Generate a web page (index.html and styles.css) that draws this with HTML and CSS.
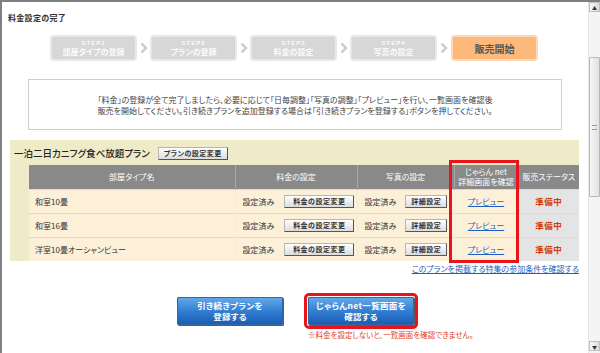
FILE: index.html
```html
<!DOCTYPE html>
<html lang="ja">
<head>
    <meta charset="UTF-8">
    <title>料金設定の完了</title>
    <link rel="stylesheet" href="styles.css">
</head>
<body>
<div class="frame">
    <div class="content">
        <h1 class="page-title">料金設定の完了</h1>

        <div class="steps">
            <div class="step"><span class="step-no">STEP1</span><span class="step-name">部屋タイプの登録</span></div>
            <svg class="step-arrow" width="8" height="12" viewBox="0 0 8 12"><path d="M1.5 1.5 L6 6 L1.5 10.5" fill="none" stroke="#c9c9c9" stroke-width="2.4"/></svg>
            <div class="step"><span class="step-no">STEP2</span><span class="step-name">プランの登録</span></div>
            <svg class="step-arrow" width="8" height="12" viewBox="0 0 8 12"><path d="M1.5 1.5 L6 6 L1.5 10.5" fill="none" stroke="#c9c9c9" stroke-width="2.4"/></svg>
            <div class="step"><span class="step-no">STEP3</span><span class="step-name">料金の設定</span></div>
            <svg class="step-arrow" width="8" height="12" viewBox="0 0 8 12"><path d="M1.5 1.5 L6 6 L1.5 10.5" fill="none" stroke="#c9c9c9" stroke-width="2.4"/></svg>
            <div class="step"><span class="step-no">STEP4</span><span class="step-name">写真の設定</span></div>
            <svg class="step-arrow" width="8" height="12" viewBox="0 0 8 12"><path d="M1.5 1.5 L6 6 L1.5 10.5" fill="none" stroke="#c9c9c9" stroke-width="2.4"/></svg>
            <div class="step step-current">販売開始</div>
        </div>

        <div class="message">
            <p>「料金」の登録が全て完了しましたら、必要に応じて「日毎調整」「写真の調整」「プレビュー」を行い、一覧画面を確認後<br>
            販売を開始してください。引き続きプランを追加登録する場合は「引き続きプランを登録する」ボタンを押してください。</p>
        </div>

        <div class="plan">
            <div class="plan-head">
                <span class="plan-name">一泊二日カニフグ食べ放題プラン</span>
                <button type="button" class="btn-small">プランの設定変更</button>
            </div>
            <div class="table-wrap">
                <table class="rooms">
                    <thead>
                        <tr>
                            <th class="c-name">部屋タイプ名</th>
                            <th class="c-price">料金の設定</th>
                            <th class="c-photo">写真の設定</th>
                            <th class="c-preview">じゃらん net<br>詳細画面を確認</th>
                            <th class="c-status">販売ステータス</th>
                        </tr>
                    </thead>
                    <tbody>
                        <tr>
                            <td class="c-name">和室10畳</td>
                            <td class="c-price"><span class="done">設定済み</span><button type="button" class="btn-small">料金の設定変更</button></td>
                            <td class="c-photo"><span class="done">設定済み</span><button type="button" class="btn-small">詳細設定</button></td>
                            <td class="c-preview"><a href="#">プレビュー</a></td>
                            <td class="c-status">準備中</td>
                        </tr>
                        <tr>
                            <td class="c-name">和室16畳</td>
                            <td class="c-price"><span class="done">設定済み</span><button type="button" class="btn-small">料金の設定変更</button></td>
                            <td class="c-photo"><span class="done">設定済み</span><button type="button" class="btn-small">詳細設定</button></td>
                            <td class="c-preview"><a href="#">プレビュー</a></td>
                            <td class="c-status">準備中</td>
                        </tr>
                        <tr>
                            <td class="c-name">洋室10畳オーシャンビュー</td>
                            <td class="c-price"><span class="done">設定済み</span><button type="button" class="btn-small">料金の設定変更</button></td>
                            <td class="c-photo"><span class="done">設定済み</span><button type="button" class="btn-small">詳細設定</button></td>
                            <td class="c-preview"><a href="#">プレビュー</a></td>
                            <td class="c-status">準備中</td>
                        </tr>
                    </tbody>
                </table>
                <div class="mark-preview"></div>
            </div>
        </div>

        <div class="special-link"><a href="#">このプランを掲載する特集の参加条件を確認する</a></div>

        <div class="actions">
            <button type="button" class="btn-blue">引き続きプランを<br>登録する</button>
            <div class="action-main">
                <button type="button" class="btn-blue btn-marked">じゃらんnet一覧画面を<br>確認する</button>
                <p class="note">※料金を設定しないと、一覧画面を確認できません。</p>
            </div>
        </div>
    </div>

    <div class="scrollbar">
        <div class="sb-btn">&#9650;</div>
        <div class="sb-track">
            <div class="sb-thumb"><span></span></div>
        </div>
        <div class="sb-btn">&#9660;</div>
    </div>
</div>
</body>
</html>
```

FILE: styles.css
```css
* {
    box-sizing: border-box;
}
body {
    margin: 0;
    font-family: "Noto Sans CJK JP", "DejaVu Sans", sans-serif;
    font-size: 8px;
    color: #333;
    font-feature-settings: "palt";
    background: #fff;
}
.frame {
    display: flex;
    height: 353px;
    border-top: 2px solid #808080;
    border-left: 2px solid #808080;
}
.content {
    flex: 1;
    position: relative;
}
.page-title {
    margin: 0;
    padding: 11px 0 0 6px;
    font-size: 8px;
    line-height: 10px;
    font-weight: bold;
    color: #333;
    letter-spacing: 0.3px;
}

/* steps */
.steps {
    display: flex;
    align-items: center;
    margin: 12px 0 0 48px;
}
.step {
    width: 87px;
    height: 26px;
    border: 2px solid #e8e8e8;
    border-radius: 4px;
    background: #d7d7d7;
    color: #fbfbfb;
    display: flex;
    flex-direction: column;
    align-items: center;
    justify-content: center;
    font-weight: bold;
}
.step-no {
    font-size: 6px;
    line-height: 8px;
    letter-spacing: 1px;
    font-family: "Liberation Sans", sans-serif;
}
.step-name {
    font-size: 8px;
    line-height: 10px;
}
.step-arrow {
    margin: 0 2px 0 3px;
}
.step-current {
    background: #fdb97c;
    border-color: #fdd8b4;
    color: #555;
    font-size: 10px;
    margin-left: 1px;
}

/* message */
.message {
    margin: 18px 0 0 26px;
    width: 534px;
    height: 51px;
    border: 1px solid #cfcfcf;
    display: flex;
    align-items: center;
    justify-content: center;
}
.message p {
    margin: 0;
    text-align: center;
    line-height: 11px;
    color: #444;
}

/* plan */
.plan {
    margin: 10px 0 0 8px;
    width: 569px;
    background: #efebc9;
    padding: 6px 0 0 0;
}
.plan-head {
    display: flex;
    align-items: center;
    gap: 8px;
    padding-left: 4px;
    height: 14px;
    margin-bottom: 5px;
}
.plan-name {
    font-size: 9.5px;
    color: #222;
    font-weight: 500;
}
.btn-small {
    font-family: inherit;
    font-feature-settings: "palt";
    font-size: 7px;
    font-weight: bold;
    color: #333;
    height: 13px;
    padding: 0 5px;
    line-height: 11px;
    background: linear-gradient(#ffffff, #dcdcdc);
    border: 1px solid #b5b5b5;
    border-right-color: #555;
    border-bottom-color: #555;
    border-radius: 1px;
    letter-spacing: 0.5px;
}
.table-wrap {
    position: relative;
    margin-left: 19px;
}
.rooms {
    border-collapse: collapse;
    width: 550px;
    table-layout: fixed;
}
.rooms th {
    background: #898989;
    color: #fff;
    font-weight: normal;
    height: 24px;
    line-height: 10px;
    border-left: 1px solid #a8a8a8;
    padding: 0;
}
.rooms th:first-child {
    border-left: none;
}
.rooms td {
    background: #fdf0d9;
    height: 24px;
    border-top: 1px solid #dcdad6;
    border-left: 1px solid #f4ede2;
    padding: 0 6px;
    text-align: center;
    white-space: nowrap;
}
.rooms td.c-name {
    text-align: left;
    border-left: none;
}
.rooms .c-name { width: 206px; }
.rooms .c-price { width: 122px; }
.rooms .c-photo { width: 97px; }
.rooms .c-preview { width: 64px; }
.rooms .c-status { width: 61px; }
.rooms td.c-status {
    background: #e4e4e4;
    color: #d03a0a;
    font-weight: bold;
    font-size: 8.5px;
    letter-spacing: 0.5px;
}
.rooms td.c-price, .rooms td.c-photo {
    padding: 0 2px 0 7px;
    text-align: left;
}
.done {
    display: inline-block;
    margin-right: 10px;
    vertical-align: middle;
}
.rooms .btn-small {
    vertical-align: middle;
}
.rooms td.c-photo .done {
    margin-right: 9px;
}
.rooms td.c-price .btn-small {
    width: 70px;
}
.rooms td.c-photo .btn-small {
    width: 42px;
    padding: 0;
}
.rooms a, .special-link a {
    color: #1f5fc2;
    text-decoration: underline;
}
.mark-preview {
    position: absolute;
    left: 420px;
    top: -5px;
    width: 70px;
    height: 103px;
    border: 3px solid #e8141c;
}

/* links and actions */
.special-link {
    width: 577px;
    text-align: right;
    margin-top: 3px;
    line-height: 10px;
}
.actions {
    display: flex;
    gap: 25px;
    margin: 23px 0 0 175px;
}
.btn-blue {
    width: 106px;
    height: 28px;
    font-family: inherit;
    font-feature-settings: "palt";
    font-size: 8.5px;
    font-weight: bold;
    line-height: 11px;
    color: #fff;
    background: linear-gradient(#63a7e8, #2e7bd0 55%, #1b5eb2);
    border: 1px solid #2f66a8;
    border-radius: 1px;
    box-shadow: 1px 1px 0 #5a5a5a;
    padding: 0;
    letter-spacing: 0.3px;
}
.btn-marked {
    outline: 3px solid #e8141c;
    outline-offset: 1px;
}
.note {
    margin: 5px 0 0 0;
    color: #e6401e;
    font-size: 7.5px;
    line-height: 9px;
}

/* scrollbar */
.scrollbar {
    width: 12px;
    display: flex;
    flex-direction: column;
    background: #f4f4f4;
    border-left: 1px solid #e6e6e6;
    padding-bottom: 2px;
}
.sb-btn {
    height: 10px;
    font-size: 5px;
    line-height: 10px;
    text-align: center;
    color: #333;
    background: linear-gradient(90deg, #f8f8f8, #dcdcdc);
    border: 1px solid #bfbfbf;
}
.sb-track {
    flex: 1;
    padding-top: 45px;
}
.sb-thumb {
    height: 140px;
    background: linear-gradient(90deg, #f6f6f6, #e2e2e2);
    border: 1px solid #b8b8b8;
    border-radius: 1px;
    display: flex;
    align-items: center;
    justify-content: center;
}
.sb-thumb span {
    width: 5px;
    height: 5px;
    border-top: 1px solid #999;
    border-bottom: 1px solid #999;
}
```
